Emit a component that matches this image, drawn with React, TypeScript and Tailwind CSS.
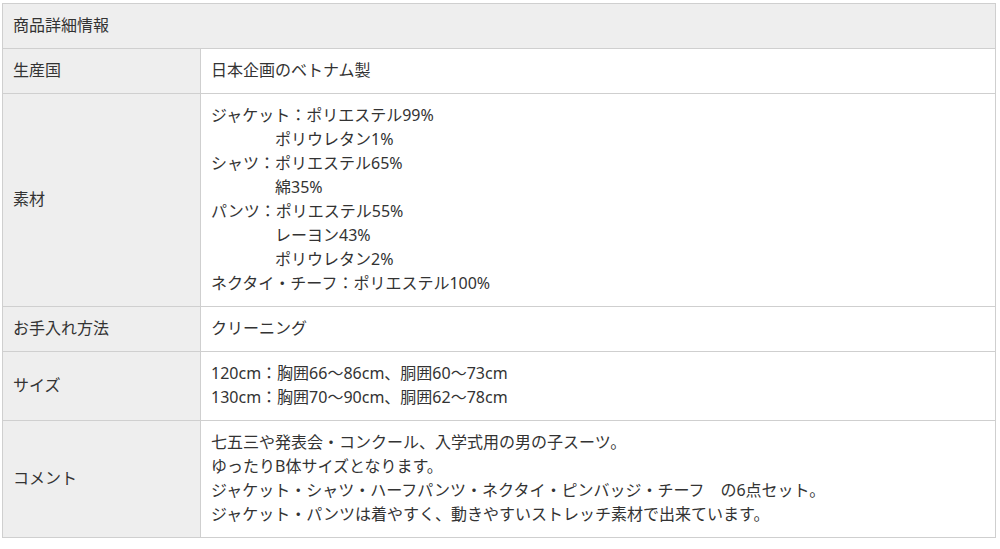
import React from "react";

const rows: { label: string; lines: string[] }[] = [
  { label: "生産国", lines: ["日本企画のベトナム製"] },
  {
    label: "素材",
    lines: [
      "ジャケット：ポリエステル99%",
      "　　　　ポリウレタン1%",
      "シャツ：ポリエステル65%",
      "　　　　綿35%",
      "パンツ：ポリエステル55%",
      "　　　　レーヨン43%",
      "　　　　ポリウレタン2%",
      "ネクタイ・チーフ：ポリエステル100%",
    ],
  },
  { label: "お手入れ方法", lines: ["クリーニング"] },
  {
    label: "サイズ",
    lines: ["120cm：胸囲66～86cm、胴囲60～73cm", "130cm：胸囲70～90cm、胴囲62～78cm"],
  },
  {
    label: "コメント",
    lines: [
      "七五三や発表会・コンクール、入学式用の男の子スーツ。",
      "ゆったりB体サイズとなります。",
      "ジャケット・シャツ・ハーフパンツ・ネクタイ・ピンバッジ・チーフ　の6点セット。",
      "ジャケット・パンツは着やすく、動きやすいストレッチ素材で出来ています。",
    ],
  },
];

export default function App() {
  return (
    <div
      className="w-[1000px] h-[549px] bg-white pt-[3px] pl-[2px] text-[#333] text-[16px] leading-[24px]"
      style={{ fontFamily: '"Noto Sans", "Noto Sans CJK JP", sans-serif' }}
    >
      <table className="w-[994px] border-collapse table-fixed">
        <colgroup>
          <col className="w-[198px]" />
          <col />
        </colgroup>
        <tbody>
          <tr>
            <th
              colSpan={2}
              className="border border-[#cfcfcf] bg-[#eeeeee] px-[10px] pt-[9px] pb-[11px] text-left font-normal"
            >
              商品詳細情報
            </th>
          </tr>
          {rows.map((r) => (
            <tr key={r.label}>
              <th className="border border-[#cfcfcf] bg-[#eeeeee] px-[10px] pt-[9px] pb-[11px] text-left font-normal align-middle">
                {r.label}
              </th>
              <td className="border border-[#cfcfcf] bg-white px-[10px] pt-[9px] pb-[11px] align-middle">
                {r.lines.map((l, i) => (
                  <div key={i} className="whitespace-pre">
                    {l}
                  </div>
                ))}
              </td>
            </tr>
          ))}
        </tbody>
      </table>
    </div>
  );
}
